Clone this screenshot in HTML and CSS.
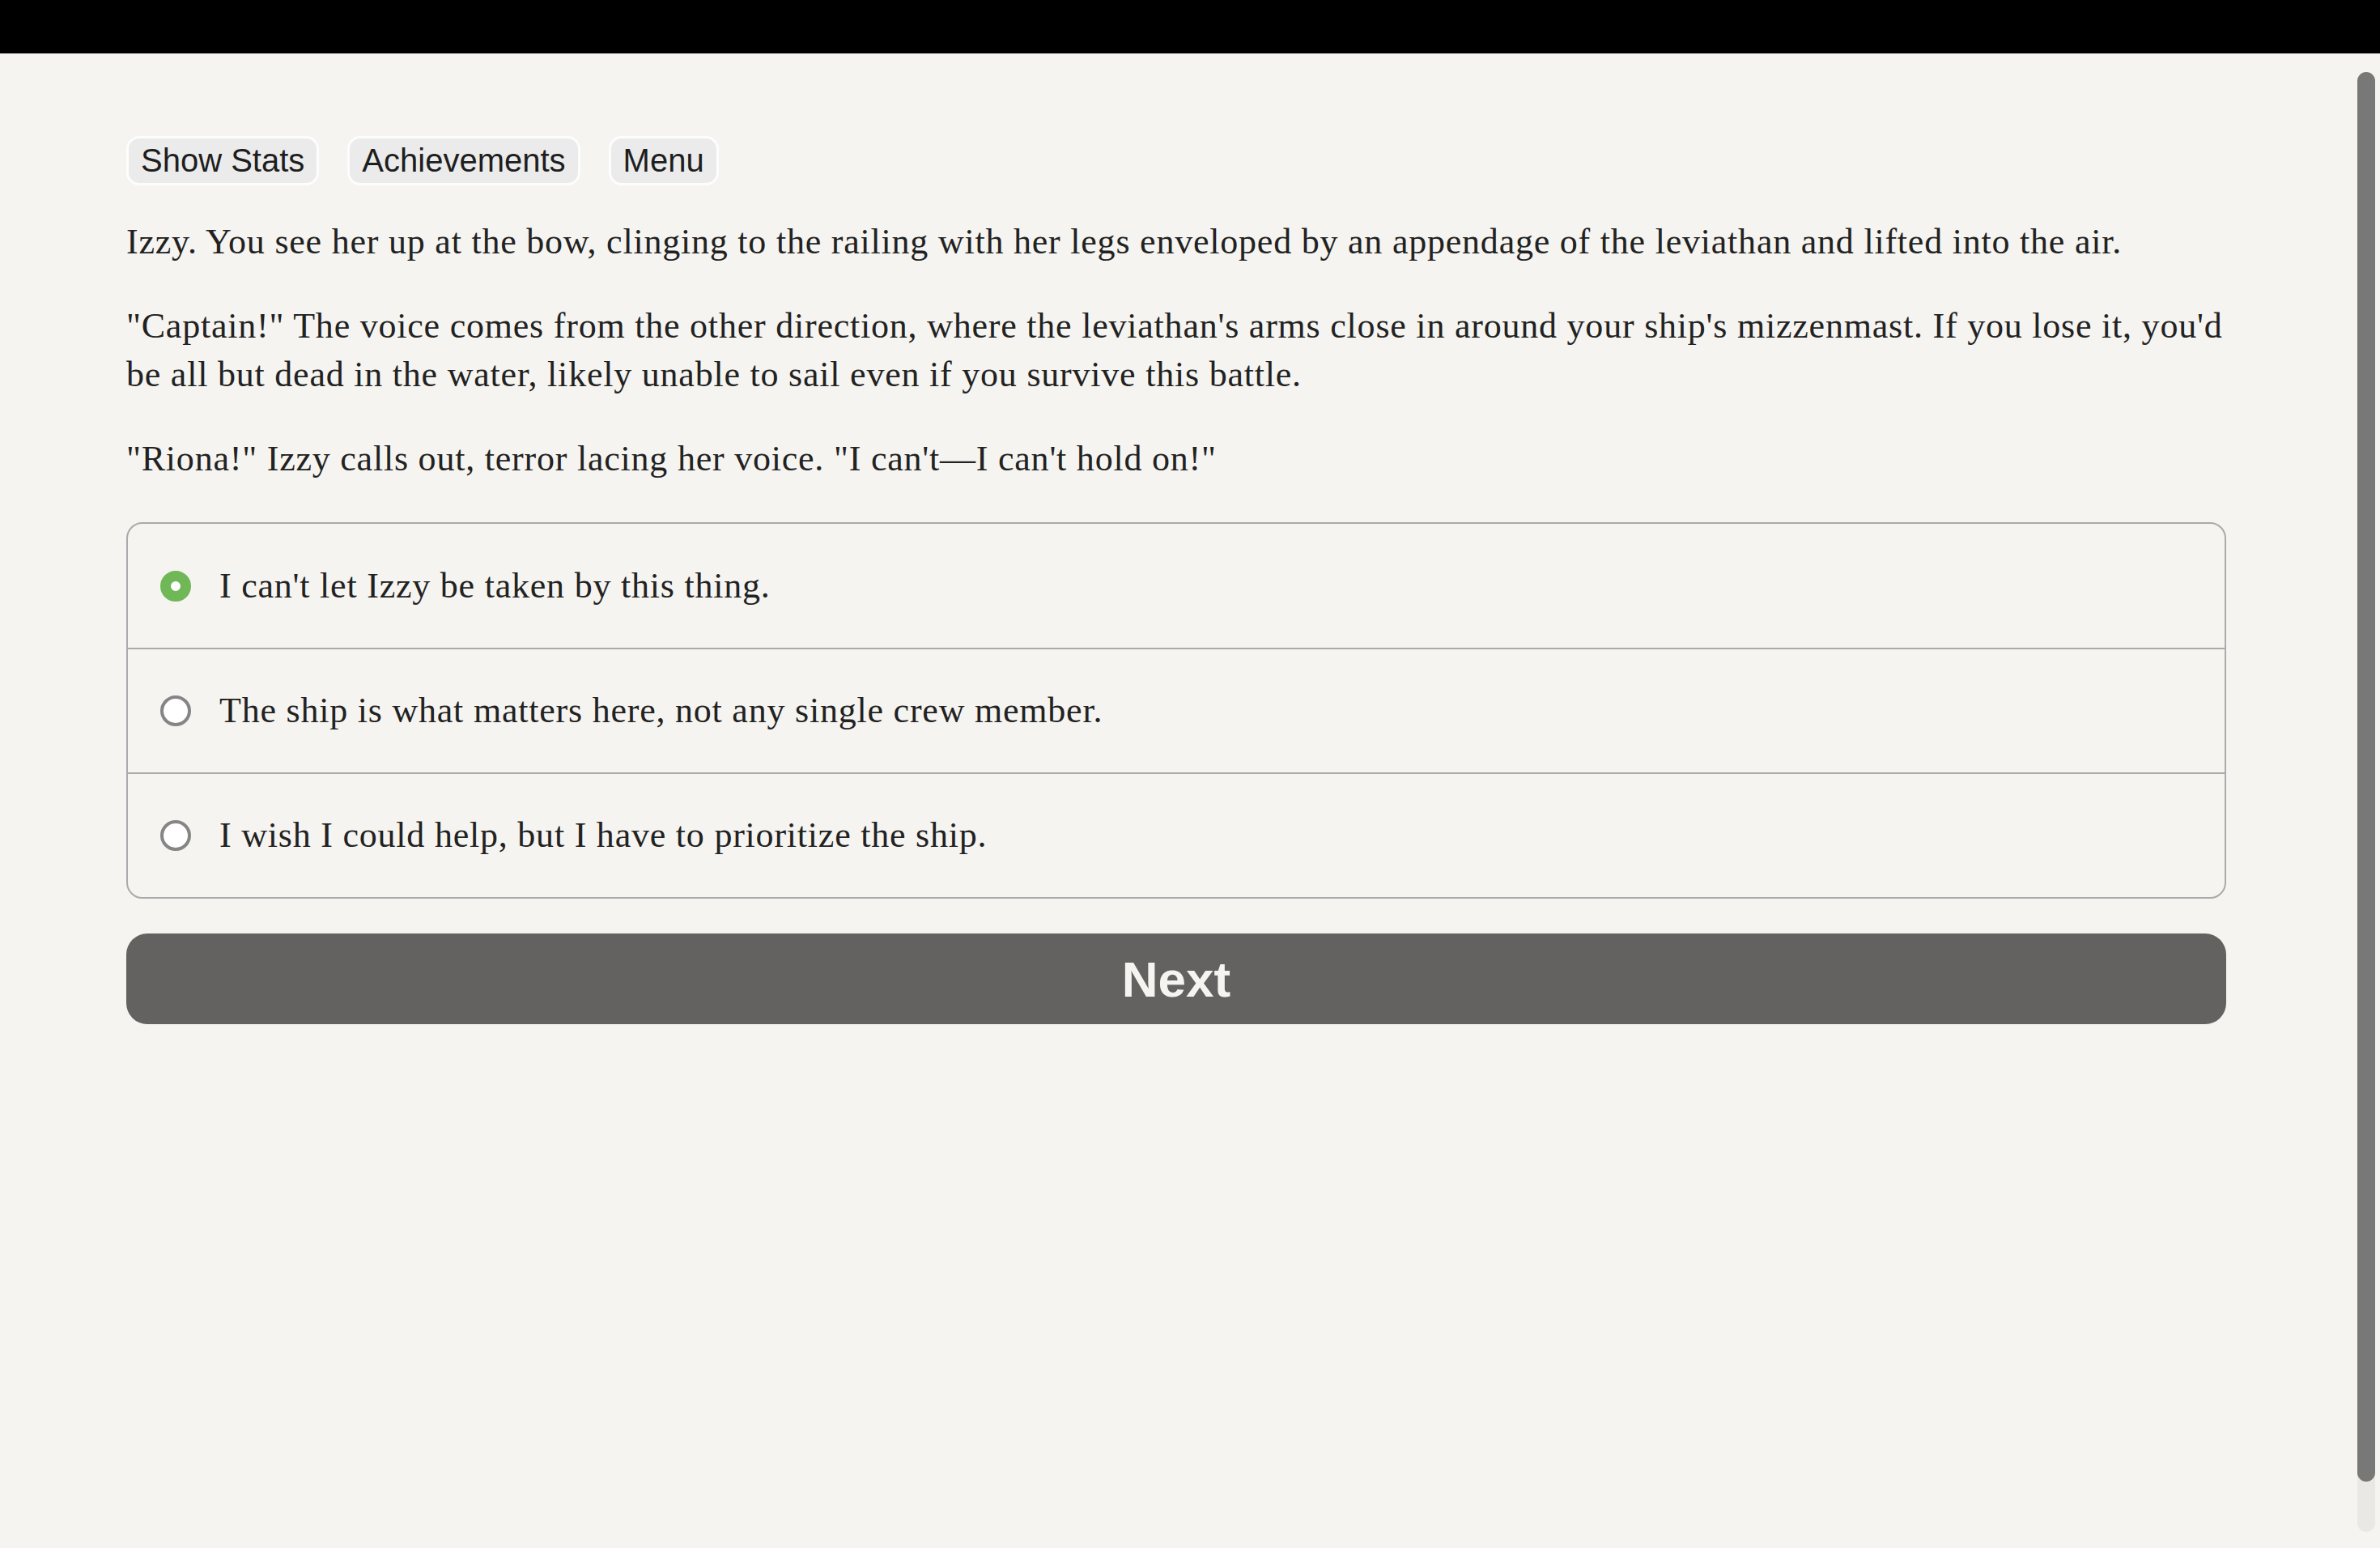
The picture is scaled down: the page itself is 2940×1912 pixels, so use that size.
FILE: index.html
```html
<!DOCTYPE html>
<html lang="en">
<head>
<meta charset="utf-8">
<title>Story</title>
<link rel="stylesheet" href="styles.css">
</head>
<body>
<div class="topbar"></div>
<main class="page">
  <nav class="toolbar">
    <button class="tool-btn">Show Stats</button>
    <button class="tool-btn">Achievements</button>
    <button class="tool-btn">Menu</button>
  </nav>
  <section class="story">
    <p>Izzy. You see her up at the bow, clinging to the railing with her legs enveloped by an appendage of the leviathan and lifted into the air.</p>
    <p>"Captain!" The voice comes from the other direction, where the leviathan's arms close in around your ship's mizzenmast. If you lose it, you'd be all but dead in the water, likely unable to sail even if you survive this battle.</p>
    <p>"Riona!" Izzy calls out, terror lacing her voice. "I can't—I can't hold on!"</p>
  </section>
  <div class="choices">
    <label class="choice">
      <span class="radio radio-on"></span>
      <span class="choice-text">I can't let Izzy be taken by this thing.</span>
    </label>
    <label class="choice">
      <span class="radio"></span>
      <span class="choice-text">The ship is what matters here, not any single crew member.</span>
    </label>
    <label class="choice">
      <span class="radio"></span>
      <span class="choice-text">I wish I could help, but I have to prioritize the ship.</span>
    </label>
  </div>
  <button class="next-btn">Next</button>
</main>
<div class="scrollbar"><div class="scroll-thumb"></div></div>
</body>
</html>
```
FILE: styles.css
```css
html, body {
  margin: 0;
  padding: 0;
  background: #f5f4f0;
}
body {
  width: 2940px;
  height: 1912px;
  overflow: hidden;
  color: #222222;
  font-family: "Liberation Serif", "Times New Roman", serif;
}
.topbar {
  height: 66px;
  background: #000000;
}
.page {
  padding: 102px 190px 0 156px;
}
.toolbar {
  display: flex;
  gap: 35px;
}
.tool-btn {
  height: 61px;
  padding: 0 15px;
  border: 3px solid #fdfdfc;
  border-radius: 16px;
  background: #ebebeb;
  color: #1e1e1e;
  font-family: "Liberation Sans", Arial, sans-serif;
  font-size: 40px;
  line-height: 55px;
  cursor: pointer;
}
.story {
  margin-top: 40px;
}
.story p {
  margin: 0 0 44px 0;
  font-size: 44px;
  line-height: 60px;
  letter-spacing: 0.78px;
}
.story p:last-child {
  margin-bottom: 48px;
}
.choices {
  border: 2px solid #aaaaae;
  border-radius: 20px;
  overflow: hidden;
}
.choice {
  display: flex;
  align-items: center;
  gap: 35px;
  height: 152px;
  padding-left: 40px;
  border-top: 2px solid #aaaaae;
  cursor: pointer;
}
.choice:first-child {
  border-top: none;
  height: 153px;
}
.radio {
  box-sizing: border-box;
  width: 38px;
  height: 38px;
  border-radius: 50%;
  border: 4px solid #858585;
  background: #ffffff;
  flex-shrink: 0;
}
.radio-on {
  border: 13px solid #70b757;
}
.choice-text {
  font-size: 44px;
  line-height: 60px;
  letter-spacing: 0.78px;
}
.next-btn {
  display: block;
  width: 100%;
  height: 112px;
  margin-top: 43px;
  border: none;
  border-radius: 26px;
  background: #636260;
  color: #f5f4f0;
  font-family: "Liberation Sans", Arial, sans-serif;
  font-weight: bold;
  font-size: 62px;
  cursor: pointer;
}
.scrollbar {
  position: fixed;
  left: 2912px;
  top: 89px;
  width: 22px;
  height: 1803px;
  border-radius: 11px;
  background: #e9e8e4;
}
.scroll-thumb {
  height: 1741px;
  border-radius: 11px;
  background: #787876;
}
```
